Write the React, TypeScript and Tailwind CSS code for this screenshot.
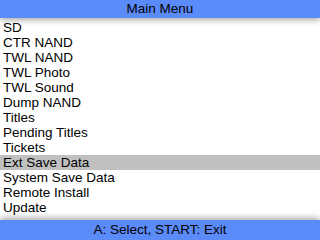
const items = [
  'SD',
  'CTR NAND',
  'TWL NAND',
  'TWL Photo',
  'TWL Sound',
  'Dump NAND',
  'Titles',
  'Pending Titles',
  'Tickets',
  'Ext Save Data',
  'System Save Data',
  'Remote Install',
  'Update',
]

const selected = 9

export default function App() {
  return (
    <div className="w-[320px] h-[240px] bg-white flex flex-col overflow-hidden font-['Liberation_Sans',Arial,sans-serif] text-[13.5px] text-black">
      <div className="relative z-10 h-[18px] shrink-0 bg-[#5b8af9] flex items-center justify-center shadow-[0_2px_6px_rgba(0,0,0,0.35)]">
        Main Menu
      </div>

      <div className="flex-1 pt-[2px]">
        {items.map((item, i) => (
          <div
            key={item}
            className={
              i === selected
                ? 'h-[15px] leading-[15px] px-[3px] bg-[#c0c0c0]'
                : 'h-[15px] leading-[15px] px-[3px]'
            }
          >
            {item}
          </div>
        ))}
      </div>

      <div className="relative z-10 h-[20px] shrink-0 bg-[#5b8af9] flex items-center justify-center shadow-[0_-2px_6px_rgba(0,0,0,0.35)]">
        A: Select, START: Exit
      </div>
    </div>
  )
}
